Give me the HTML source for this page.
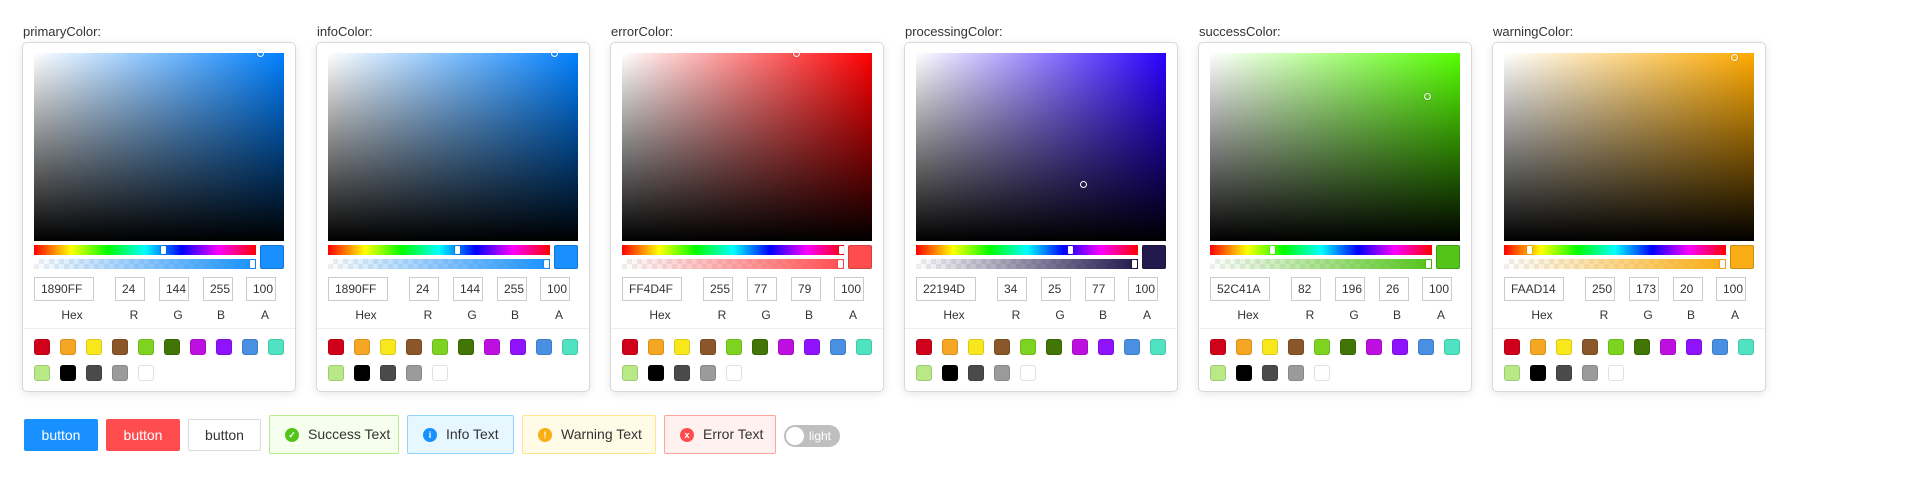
<!DOCTYPE html>
<html><head><meta charset="utf-8"><style>
*{box-sizing:border-box;margin:0;padding:0}
body{width:1920px;height:494px;background:#fff;font-family:"Liberation Sans",sans-serif;color:#333;position:relative;overflow:hidden}
.lb{position:absolute;top:24px;font-size:13px;color:#333}
.c{position:absolute;top:43px;width:272px;height:348px;background:#fff;border-radius:4px;box-shadow:0 0 0 1px #d9d9d9,0 2px 10px rgba(0,0,0,.12)}
.c>*{position:absolute}
.sat{left:11px;top:10px;width:250px;height:188px}
.pt{width:7px;height:7px;border:1.5px solid #fff;border-radius:50%;box-shadow:0 0 1px rgba(0,0,0,.6);margin:-3.5px 0 0 -3.5px}
.hue{left:11px;top:202px;width:222px;height:10px;background:linear-gradient(to right,#f00,#ff0,#0f0,#0ff,#00f,#f0f,#f00)}
.al{left:11px;top:216px;width:222px;height:10px;background-color:#fff;background-image:repeating-conic-gradient(#eeeeee 0 25%,#fff 0 50%);background-size:10px 10px}
.al i{position:absolute;inset:0}
.th{top:1px;width:5px;height:8px;background:#fff;border-radius:1px;box-shadow:0 0 1px rgba(0,0,0,.6)}
.pv{left:237px;top:202px;width:24px;height:24px;border-radius:2px;box-shadow:inset 0 0 0 1px rgba(0,0,0,.18)}
.in{top:234px;height:24px;border:1px solid #ccc;font-size:12px;line-height:22px;padding-left:6px;color:#333}
.t{top:265px;font-size:12px;color:#333;width:30px;margin-left:-15px;text-align:center}
.dv{left:0;top:285px;width:272px;height:1px;background:#eee}
.sw{width:16px;height:16px;border-radius:3px;box-shadow:inset 0 0 0 1px rgba(0,0,0,.12)}
.b{position:absolute;top:419px;height:32px;border-radius:2px;font-size:14px;line-height:32px;text-align:center}
.a{position:absolute;top:415px;height:39px;border:1px solid;border-radius:2px;font-size:14px;line-height:37px;padding-left:38px}
.a b{position:absolute;left:15px;top:12px;width:14px;height:14px;border-radius:50%;color:#fff;font-size:9px;line-height:14px;text-align:center;font-weight:bold}
</style></head><body>

<div class="lb" style="left:23px">primaryColor:</div>
<div class="c" style="left:23px">
<div class="sat" style="background:linear-gradient(to top,#000,transparent),linear-gradient(to right,#fff,hsl(210,100%,50%))"></div>
<div class="pt" style="left:237px;top:10px"></div>
<div class="hue"></div><div class="th" style="left:138px;top:203px"></div>
<div class="al"><i style="background:linear-gradient(to right,rgba(24,144,255,0),#1890FF)"></i></div><div class="th" style="left:227px;top:217px"></div>
<div class="pv" style="background:#1890FF"></div>
<div class="in" style="left:11px;width:60px">1890FF</div><div class="in" style="left:92px;width:30px">24</div><div class="in" style="left:136px;width:30px">144</div><div class="in" style="left:180px;width:30px">255</div><div class="in" style="left:223px;width:30px">100</div>
<div class="t" style="left:49px">Hex</div><div class="t" style="left:111px">R</div><div class="t" style="left:155px">G</div><div class="t" style="left:198px">B</div><div class="t" style="left:242px">A</div>
<div class="dv"></div>
<div class="sw" style="left:11px;top:296px;background:#D0021B"></div><div class="sw" style="left:37px;top:296px;background:#F5A623"></div><div class="sw" style="left:63px;top:296px;background:#F8E71C"></div><div class="sw" style="left:89px;top:296px;background:#8B572A"></div><div class="sw" style="left:115px;top:296px;background:#7ED321"></div><div class="sw" style="left:141px;top:296px;background:#417505"></div><div class="sw" style="left:167px;top:296px;background:#BD10E0"></div><div class="sw" style="left:193px;top:296px;background:#9013FE"></div><div class="sw" style="left:219px;top:296px;background:#4A90E2"></div><div class="sw" style="left:245px;top:296px;background:#50E3C2"></div>
<div class="sw" style="left:11px;top:322px;background:#B8E986"></div><div class="sw" style="left:37px;top:322px;background:#000"></div><div class="sw" style="left:63px;top:322px;background:#4A4A4A"></div><div class="sw" style="left:89px;top:322px;background:#9B9B9B"></div><div class="sw" style="left:115px;top:322px;background:#fff"></div>
</div>

<div class="lb" style="left:317px">infoColor:</div>
<div class="c" style="left:317px">
<div class="sat" style="background:linear-gradient(to top,#000,transparent),linear-gradient(to right,#fff,hsl(210,100%,50%))"></div>
<div class="pt" style="left:237px;top:10px"></div>
<div class="hue"></div><div class="th" style="left:138px;top:203px"></div>
<div class="al"><i style="background:linear-gradient(to right,rgba(24,144,255,0),#1890FF)"></i></div><div class="th" style="left:227px;top:217px"></div>
<div class="pv" style="background:#1890FF"></div>
<div class="in" style="left:11px;width:60px">1890FF</div><div class="in" style="left:92px;width:30px">24</div><div class="in" style="left:136px;width:30px">144</div><div class="in" style="left:180px;width:30px">255</div><div class="in" style="left:223px;width:30px">100</div>
<div class="t" style="left:49px">Hex</div><div class="t" style="left:111px">R</div><div class="t" style="left:155px">G</div><div class="t" style="left:198px">B</div><div class="t" style="left:242px">A</div>
<div class="dv"></div>
<div class="sw" style="left:11px;top:296px;background:#D0021B"></div><div class="sw" style="left:37px;top:296px;background:#F5A623"></div><div class="sw" style="left:63px;top:296px;background:#F8E71C"></div><div class="sw" style="left:89px;top:296px;background:#8B572A"></div><div class="sw" style="left:115px;top:296px;background:#7ED321"></div><div class="sw" style="left:141px;top:296px;background:#417505"></div><div class="sw" style="left:167px;top:296px;background:#BD10E0"></div><div class="sw" style="left:193px;top:296px;background:#9013FE"></div><div class="sw" style="left:219px;top:296px;background:#4A90E2"></div><div class="sw" style="left:245px;top:296px;background:#50E3C2"></div>
<div class="sw" style="left:11px;top:322px;background:#B8E986"></div><div class="sw" style="left:37px;top:322px;background:#000"></div><div class="sw" style="left:63px;top:322px;background:#4A4A4A"></div><div class="sw" style="left:89px;top:322px;background:#9B9B9B"></div><div class="sw" style="left:115px;top:322px;background:#fff"></div>
</div>

<div class="lb" style="left:611px">errorColor:</div>
<div class="c" style="left:611px">
<div class="sat" style="background:linear-gradient(to top,#000,transparent),linear-gradient(to right,#fff,hsl(359.6,100%,50%))"></div>
<div class="pt" style="left:185px;top:10px"></div>
<div class="hue"></div><div class="th" style="left:228px;top:203px"></div>
<div class="al"><i style="background:linear-gradient(to right,rgba(255,77,79,0),#FF4D4F)"></i></div><div class="th" style="left:227px;top:217px"></div>
<div class="pv" style="background:#FF4D4F"></div>
<div class="in" style="left:11px;width:60px">FF4D4F</div><div class="in" style="left:92px;width:30px">255</div><div class="in" style="left:136px;width:30px">77</div><div class="in" style="left:180px;width:30px">79</div><div class="in" style="left:223px;width:30px">100</div>
<div class="t" style="left:49px">Hex</div><div class="t" style="left:111px">R</div><div class="t" style="left:155px">G</div><div class="t" style="left:198px">B</div><div class="t" style="left:242px">A</div>
<div class="dv"></div>
<div class="sw" style="left:11px;top:296px;background:#D0021B"></div><div class="sw" style="left:37px;top:296px;background:#F5A623"></div><div class="sw" style="left:63px;top:296px;background:#F8E71C"></div><div class="sw" style="left:89px;top:296px;background:#8B572A"></div><div class="sw" style="left:115px;top:296px;background:#7ED321"></div><div class="sw" style="left:141px;top:296px;background:#417505"></div><div class="sw" style="left:167px;top:296px;background:#BD10E0"></div><div class="sw" style="left:193px;top:296px;background:#9013FE"></div><div class="sw" style="left:219px;top:296px;background:#4A90E2"></div><div class="sw" style="left:245px;top:296px;background:#50E3C2"></div>
<div class="sw" style="left:11px;top:322px;background:#B8E986"></div><div class="sw" style="left:37px;top:322px;background:#000"></div><div class="sw" style="left:63px;top:322px;background:#4A4A4A"></div><div class="sw" style="left:89px;top:322px;background:#9B9B9B"></div><div class="sw" style="left:115px;top:322px;background:#fff"></div>
</div>

<div class="lb" style="left:905px">processingColor:</div>
<div class="c" style="left:905px">
<div class="sat" style="background:linear-gradient(to top,#000,transparent),linear-gradient(to right,#fff,hsl(250,100%,50%))"></div>
<div class="pt" style="left:178px;top:141px"></div>
<div class="hue"></div><div class="th" style="left:163px;top:203px"></div>
<div class="al"><i style="background:linear-gradient(to right,rgba(34,25,77,0),#22194D)"></i></div><div class="th" style="left:227px;top:217px"></div>
<div class="pv" style="background:#22194D"></div>
<div class="in" style="left:11px;width:60px">22194D</div><div class="in" style="left:92px;width:30px">34</div><div class="in" style="left:136px;width:30px">25</div><div class="in" style="left:180px;width:30px">77</div><div class="in" style="left:223px;width:30px">100</div>
<div class="t" style="left:49px">Hex</div><div class="t" style="left:111px">R</div><div class="t" style="left:155px">G</div><div class="t" style="left:198px">B</div><div class="t" style="left:242px">A</div>
<div class="dv"></div>
<div class="sw" style="left:11px;top:296px;background:#D0021B"></div><div class="sw" style="left:37px;top:296px;background:#F5A623"></div><div class="sw" style="left:63px;top:296px;background:#F8E71C"></div><div class="sw" style="left:89px;top:296px;background:#8B572A"></div><div class="sw" style="left:115px;top:296px;background:#7ED321"></div><div class="sw" style="left:141px;top:296px;background:#417505"></div><div class="sw" style="left:167px;top:296px;background:#BD10E0"></div><div class="sw" style="left:193px;top:296px;background:#9013FE"></div><div class="sw" style="left:219px;top:296px;background:#4A90E2"></div><div class="sw" style="left:245px;top:296px;background:#50E3C2"></div>
<div class="sw" style="left:11px;top:322px;background:#B8E986"></div><div class="sw" style="left:37px;top:322px;background:#000"></div><div class="sw" style="left:63px;top:322px;background:#4A4A4A"></div><div class="sw" style="left:89px;top:322px;background:#9B9B9B"></div><div class="sw" style="left:115px;top:322px;background:#fff"></div>
</div>

<div class="lb" style="left:1199px">successColor:</div>
<div class="c" style="left:1199px">
<div class="sat" style="background:linear-gradient(to top,#000,transparent),linear-gradient(to right,#fff,hsl(100,100%,50%))"></div>
<div class="pt" style="left:228px;top:53px"></div>
<div class="hue"></div><div class="th" style="left:71px;top:203px"></div>
<div class="al"><i style="background:linear-gradient(to right,rgba(82,196,26,0),#52C41A)"></i></div><div class="th" style="left:227px;top:217px"></div>
<div class="pv" style="background:#52C41A"></div>
<div class="in" style="left:11px;width:60px">52C41A</div><div class="in" style="left:92px;width:30px">82</div><div class="in" style="left:136px;width:30px">196</div><div class="in" style="left:180px;width:30px">26</div><div class="in" style="left:223px;width:30px">100</div>
<div class="t" style="left:49px">Hex</div><div class="t" style="left:111px">R</div><div class="t" style="left:155px">G</div><div class="t" style="left:198px">B</div><div class="t" style="left:242px">A</div>
<div class="dv"></div>
<div class="sw" style="left:11px;top:296px;background:#D0021B"></div><div class="sw" style="left:37px;top:296px;background:#F5A623"></div><div class="sw" style="left:63px;top:296px;background:#F8E71C"></div><div class="sw" style="left:89px;top:296px;background:#8B572A"></div><div class="sw" style="left:115px;top:296px;background:#7ED321"></div><div class="sw" style="left:141px;top:296px;background:#417505"></div><div class="sw" style="left:167px;top:296px;background:#BD10E0"></div><div class="sw" style="left:193px;top:296px;background:#9013FE"></div><div class="sw" style="left:219px;top:296px;background:#4A90E2"></div><div class="sw" style="left:245px;top:296px;background:#50E3C2"></div>
<div class="sw" style="left:11px;top:322px;background:#B8E986"></div><div class="sw" style="left:37px;top:322px;background:#000"></div><div class="sw" style="left:63px;top:322px;background:#4A4A4A"></div><div class="sw" style="left:89px;top:322px;background:#9B9B9B"></div><div class="sw" style="left:115px;top:322px;background:#fff"></div>
</div>

<div class="lb" style="left:1493px">warningColor:</div>
<div class="c" style="left:1493px">
<div class="sat" style="background:linear-gradient(to top,#000,transparent),linear-gradient(to right,#fff,hsl(40,100%,50%))"></div>
<div class="pt" style="left:241px;top:14px"></div>
<div class="hue"></div><div class="th" style="left:34px;top:203px"></div>
<div class="al"><i style="background:linear-gradient(to right,rgba(250,173,20,0),#FAAD14)"></i></div><div class="th" style="left:227px;top:217px"></div>
<div class="pv" style="background:#FAAD14"></div>
<div class="in" style="left:11px;width:60px">FAAD14</div><div class="in" style="left:92px;width:30px">250</div><div class="in" style="left:136px;width:30px">173</div><div class="in" style="left:180px;width:30px">20</div><div class="in" style="left:223px;width:30px">100</div>
<div class="t" style="left:49px">Hex</div><div class="t" style="left:111px">R</div><div class="t" style="left:155px">G</div><div class="t" style="left:198px">B</div><div class="t" style="left:242px">A</div>
<div class="dv"></div>
<div class="sw" style="left:11px;top:296px;background:#D0021B"></div><div class="sw" style="left:37px;top:296px;background:#F5A623"></div><div class="sw" style="left:63px;top:296px;background:#F8E71C"></div><div class="sw" style="left:89px;top:296px;background:#8B572A"></div><div class="sw" style="left:115px;top:296px;background:#7ED321"></div><div class="sw" style="left:141px;top:296px;background:#417505"></div><div class="sw" style="left:167px;top:296px;background:#BD10E0"></div><div class="sw" style="left:193px;top:296px;background:#9013FE"></div><div class="sw" style="left:219px;top:296px;background:#4A90E2"></div><div class="sw" style="left:245px;top:296px;background:#50E3C2"></div>
<div class="sw" style="left:11px;top:322px;background:#B8E986"></div><div class="sw" style="left:37px;top:322px;background:#000"></div><div class="sw" style="left:63px;top:322px;background:#4A4A4A"></div><div class="sw" style="left:89px;top:322px;background:#9B9B9B"></div><div class="sw" style="left:115px;top:322px;background:#fff"></div>
</div>

<div class="b" style="left:24px;width:74px;background:#1890FF;color:#fff">button</div>
<div class="b" style="left:106px;width:74px;background:#FF4D4F;color:#fff">button</div>
<div class="b" style="left:188px;width:73px;border:1px solid #d9d9d9;line-height:30px;color:#333">button</div>
<div class="a" style="left:269px;width:130px;background:#f6ffed;border-color:#b7eb8f"><b style="background:#52c41a">✓</b>Success Text</div>
<div class="a" style="left:407px;width:107px;background:#e6f7ff;border-color:#91d5ff"><b style="background:#1890ff">i</b>Info Text</div>
<div class="a" style="left:522px;width:134px;background:#fffbe6;border-color:#ffe58f"><b style="background:#faad14">!</b>Warning Text</div>
<div class="a" style="left:664px;width:112px;background:#fff1f0;border-color:#ffa39e"><b style="background:#ff4d4f">x</b>Error Text</div>
<div style="position:absolute;left:784px;top:425px;width:56px;height:22px;border-radius:11px;background:#bfbfbf;color:#fff;font-size:12px;line-height:22px;padding-left:25px">light<span style="position:absolute;left:2px;top:2px;width:18px;height:18px;border-radius:50%;background:#fff"></span></div>
</body></html>
